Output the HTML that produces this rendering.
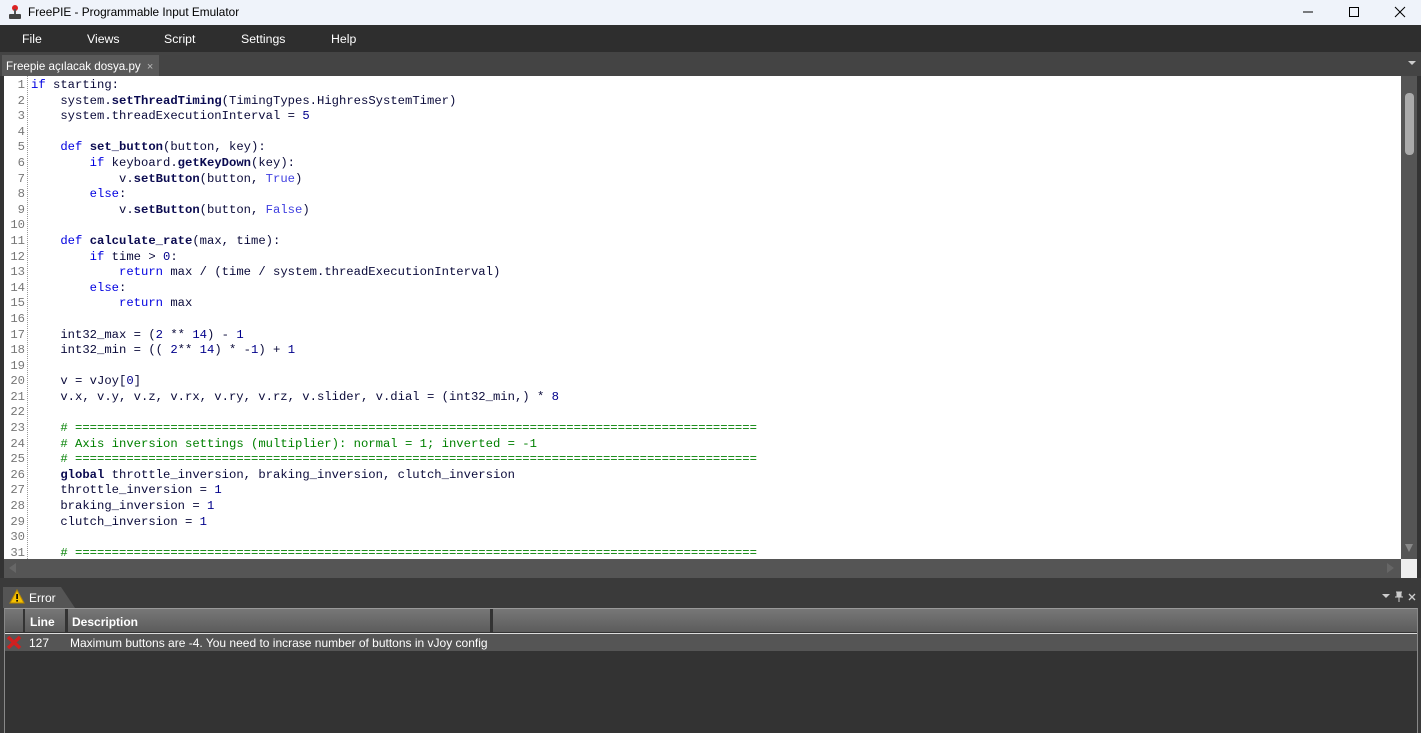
<!DOCTYPE html>
<html><head><meta charset="utf-8"><style>
*{margin:0;padding:0;box-sizing:border-box}
body{width:1421px;height:733px;overflow:hidden;background:#333;font-family:"Liberation Sans",sans-serif;position:relative}
.title{position:absolute;left:0;top:0;width:1421px;height:25px;background:#eff3fa;color:#000;font-size:11.8px}
.title span.t{position:absolute;left:28px;top:5px}
.menu{position:absolute;top:25px;left:0;width:1421px;height:27px;background:#2e2e2e;color:#fff;font-size:12.3px}
.menu span{position:absolute;top:7px}
.tabrow{position:absolute;top:52px;left:0;width:1421px;height:24px;background:#444}
.tab{position:absolute;left:2px;top:3px;height:21px;width:157px;background:#595959;color:#fff;font-size:11.6px;padding:5px 0 0 4px;white-space:nowrap}
.ed{position:absolute;left:4px;top:76px;width:1397px;height:483px;background:#fff;overflow:hidden}
.gut{position:absolute;left:0;top:0;width:24px;height:483px;border-right:1px dotted #999}
pre{font-family:"Liberation Mono",monospace;font-size:12.23px;line-height:15.6px;position:absolute;top:2px;color:#0a0a3a}
.ln{left:0;width:21px;text-align:right;color:#777}
.code{left:27px}
.k{color:#0000e0}.n{color:#00008b}.c{color:#008000}.b{color:#0a0a50;font-weight:bold}.p{color:#4040e0}
.vs{position:absolute;left:1401px;top:76px;width:16px;height:483px;background:#555}
.hs{position:absolute;left:4px;top:559px;width:1397px;height:19px;background:#555}
.err{position:absolute;left:0;top:587px;width:1421px;height:146px;background:#3a3a3a}
.e{font-size:12px}
</style></head><body>
<div class="title">
<svg style="position:absolute;left:7px;top:4px" width="16" height="16"><circle cx="8" cy="4" r="3" fill="#d22"/><rect x="7" y="5" width="2" height="6" fill="#555"/><rect x="2" y="10" width="12" height="5" rx="1" fill="#444"/></svg>
<span class="t">FreePIE - Programmable Input Emulator</span>
<svg style="position:absolute;left:1300px;top:5px" width="110" height="14"><line x1="3" y1="7" x2="13" y2="7" stroke="#000"/><rect x="49.5" y="2.5" width="9" height="9" fill="none" stroke="#000"/><path d="M95 2 L105 12 M105 2 L95 12" stroke="#000"/></svg>
</div>
<div class="menu"><span style="left:22px">File</span><span style="left:87px">Views</span><span style="left:164px">Script</span><span style="left:241px">Settings</span><span style="left:331px">Help</span></div>
<div class="tabrow"><div class="tab">Freepie açılacak dosya.py <span style="color:#bbb;font-size:11px;margin-left:3px">×</span></div>
<svg style="position:absolute;left:1408px;top:8px" width="8" height="6"><path d="M0 1H8L4 5Z" fill="#ccc"/></svg></div>
<div class="ed"><div class="gut"></div>
<pre class="ln">1
2
3
4
5
6
7
8
9
10
11
12
13
14
15
16
17
18
19
20
21
22
23
24
25
26
27
28
29
30
31</pre>
<pre class="code"><span class="k">if</span> starting:
    system.<span class="b">setThreadTiming</span>(TimingTypes.HighresSystemTimer)
    system.threadExecutionInterval = <span class="n">5</span>

    <span class="k">def</span> <span class="b">set_button</span>(button, key):
        <span class="k">if</span> keyboard.<span class="b">getKeyDown</span>(key):
            v.<span class="b">setButton</span>(button, <span class="p">True</span>)
        <span class="k">else</span>:
            v.<span class="b">setButton</span>(button, <span class="p">False</span>)

    <span class="k">def</span> <span class="b">calculate_rate</span>(max, time):
        <span class="k">if</span> time &gt; <span class="n">0</span>:
            <span class="k">return</span> max / (time / system.threadExecutionInterval)
        <span class="k">else</span>:
            <span class="k">return</span> max

    int32_max = (<span class="n">2</span> ** <span class="n">14</span>) - <span class="n">1</span>
    int32_min = (( <span class="n">2</span>** <span class="n">14</span>) * -<span class="n">1</span>) + <span class="n">1</span>

    v = vJoy[<span class="n">0</span>]
    v.x, v.y, v.z, v.rx, v.ry, v.rz, v.slider, v.dial = (int32_min,) * <span class="n">8</span>

    <span class="c"># =============================================================================================</span>
    <span class="c"># Axis inversion settings (multiplier): normal = 1; inverted = -1</span>
    <span class="c"># =============================================================================================</span>
    <span class="b">global</span> throttle_inversion, braking_inversion, clutch_inversion
    throttle_inversion = <span class="n">1</span>
    braking_inversion = <span class="n">1</span>
    clutch_inversion = <span class="n">1</span>

    <span class="c"># =============================================================================================</span></pre>
</div>
<div class="vs"><svg width="16" height="483"><path d="M4 25 L8 17 L12 25Z" fill="#888"/><rect x="4" y="17" width="9" height="62" rx="4" fill="#aaa"/><path d="M4 468 L8 476 L12 468Z" fill="#888"/></svg></div>
<div class="hs"><svg width="1397" height="19"><path d="M12 4 L5 9 L12 14Z" fill="#666"/><path d="M1383 4 L1390 9 L1383 14Z" fill="#666"/></svg></div>
<div style="position:absolute;left:1401px;top:559px;width:16px;height:19px;background:#eee"></div>
<div style="position:absolute;left:0;top:578px;width:1421px;height:9px;background:#3a3a3a"></div>
<div class="err">
<div style="position:absolute;left:3px;top:0;width:72px;height:21px;background:#555;clip-path:polygon(0 0,58px 0,72px 21px,0 21px)"></div>
<svg style="position:absolute;left:9px;top:2px" width="16" height="15"><path d="M8 1 L15 14 L1 14Z" fill="#f5c000" stroke="#b88800"/><rect x="7.3" y="5" width="1.6" height="5" fill="#000"/><rect x="7.3" y="11" width="1.6" height="1.6" fill="#000"/></svg>
<span class="e" style="position:absolute;left:29px;top:4px;color:#fff">Error</span>
<svg style="position:absolute;left:1382px;top:4px" width="36" height="12"><path d="M0 3H8L4 7Z" fill="#ccc"/><path d="M14 1H20M15 1V6H19V1M13 6H21M17 6V11" stroke="#ccc" fill="#ccc"/><path d="M27 3L33 9M33 3L27 9" stroke="#ccc" stroke-width="1.3"/></svg>
<div style="position:absolute;left:4px;top:21px;width:1414px;height:125px;background:#333;border-left:1px solid #888;border-right:1px solid #888;border-top:1px solid #999"></div>
<div style="position:absolute;left:5px;top:22px;width:1412px;height:23px;background:linear-gradient(#777,#5c5c5c)"></div>
<div style="position:absolute;left:23px;top:22px;width:2px;height:23px;background:#333"></div>
<div style="position:absolute;left:65px;top:22px;width:3px;height:23px;background:#333"></div>
<div style="position:absolute;left:490px;top:22px;width:3px;height:23px;background:#333"></div>
<span class="e" style="position:absolute;left:30px;top:28px;color:#fff;font-weight:bold">Line</span>
<span class="e" style="position:absolute;left:72px;top:28px;color:#fff;font-weight:bold">Description</span>
<div style="position:absolute;left:5px;top:46px;width:1412px;height:18px;background:#555;border-top:1px solid #ddd"></div>
<svg style="position:absolute;left:6px;top:48px" width="16" height="15"><path d="M2 2L14 13M14 2L2 13" stroke="#d02020" stroke-width="3.5"/></svg>
<span class="e" style="position:absolute;left:29px;top:49px;color:#fff">127</span>
<span class="e" style="position:absolute;left:70px;top:49px;color:#fff">Maximum buttons are -4. You need to incrase number of buttons in vJoy config</span>
</div>
</body></html>
